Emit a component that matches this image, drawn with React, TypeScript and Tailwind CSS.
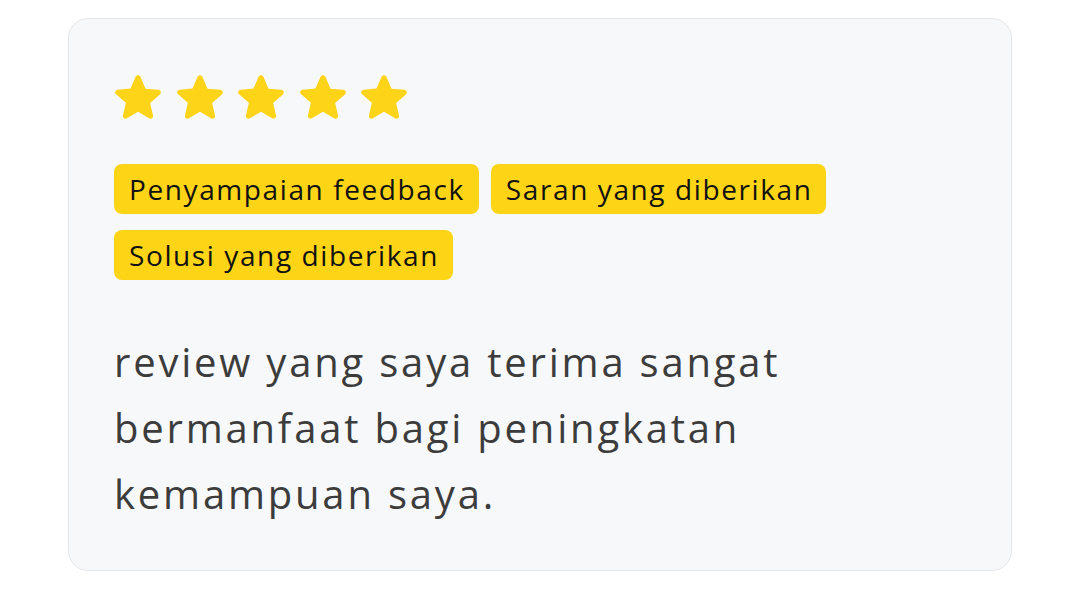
const tags = ['Penyampaian feedback', 'Saran yang diberikan', 'Solusi yang diberikan']

const StarIcon = () => (
  <svg viewBox="3 2.4 18 18" className="w-[48px] h-[48px]" fill="#fdd417">
    <path d="M12 17.27l4.15 2.51c.76.46 1.69-.22 1.49-1.08l-1.1-4.72 3.67-3.18c.67-.58.31-1.68-.57-1.75l-4.83-.41-1.89-4.46c-.34-.81-1.5-.81-1.84 0L9.19 8.63l-4.83.41c-.88.07-1.24 1.17-.57 1.75l3.67 3.18-1.1 4.72c-.2.86.73 1.54 1.49 1.08l4.15-2.5z" />
  </svg>
)

const App = () => {
  return (
    <div
      className="min-h-[600px] w-[1080px] bg-white pt-[18px] pl-[68px]"
      style={{ fontFamily: '"Open Sans", "Liberation Sans", sans-serif' }}
    >
      <div className="w-[944px] h-[553px] rounded-[20px] border-[1.5px] border-[#e4e5e7] bg-[#f7f8fa] pl-[45px] pr-[45px] pt-[53px]">
        <div className="flex gap-[13.5px]">
          {[0, 1, 2, 3, 4].map((i) => (
            <StarIcon key={i} />
          ))}
        </div>

        <div className="flex flex-wrap gap-x-[12px] gap-y-[16px] mt-[44px]">
          {tags.map((tag) => (
            <span
              key={tag}
              className="h-[50px] flex items-center pl-[15px] pr-[14px] rounded-[8px] bg-[#fdd516] text-[28px] tracking-[1.6px] text-[#111] font-medium"
            >
              {tag}
            </span>
          ))}
        </div>

        <p className="mt-[49px] max-w-[780px] text-[40px] leading-[66px] tracking-[2.8px] text-[#3c3c3c]">
          review yang saya terima sangat bermanfaat bagi peningkatan kemampuan saya.
        </p>
      </div>
    </div>
  )
}

export default App
